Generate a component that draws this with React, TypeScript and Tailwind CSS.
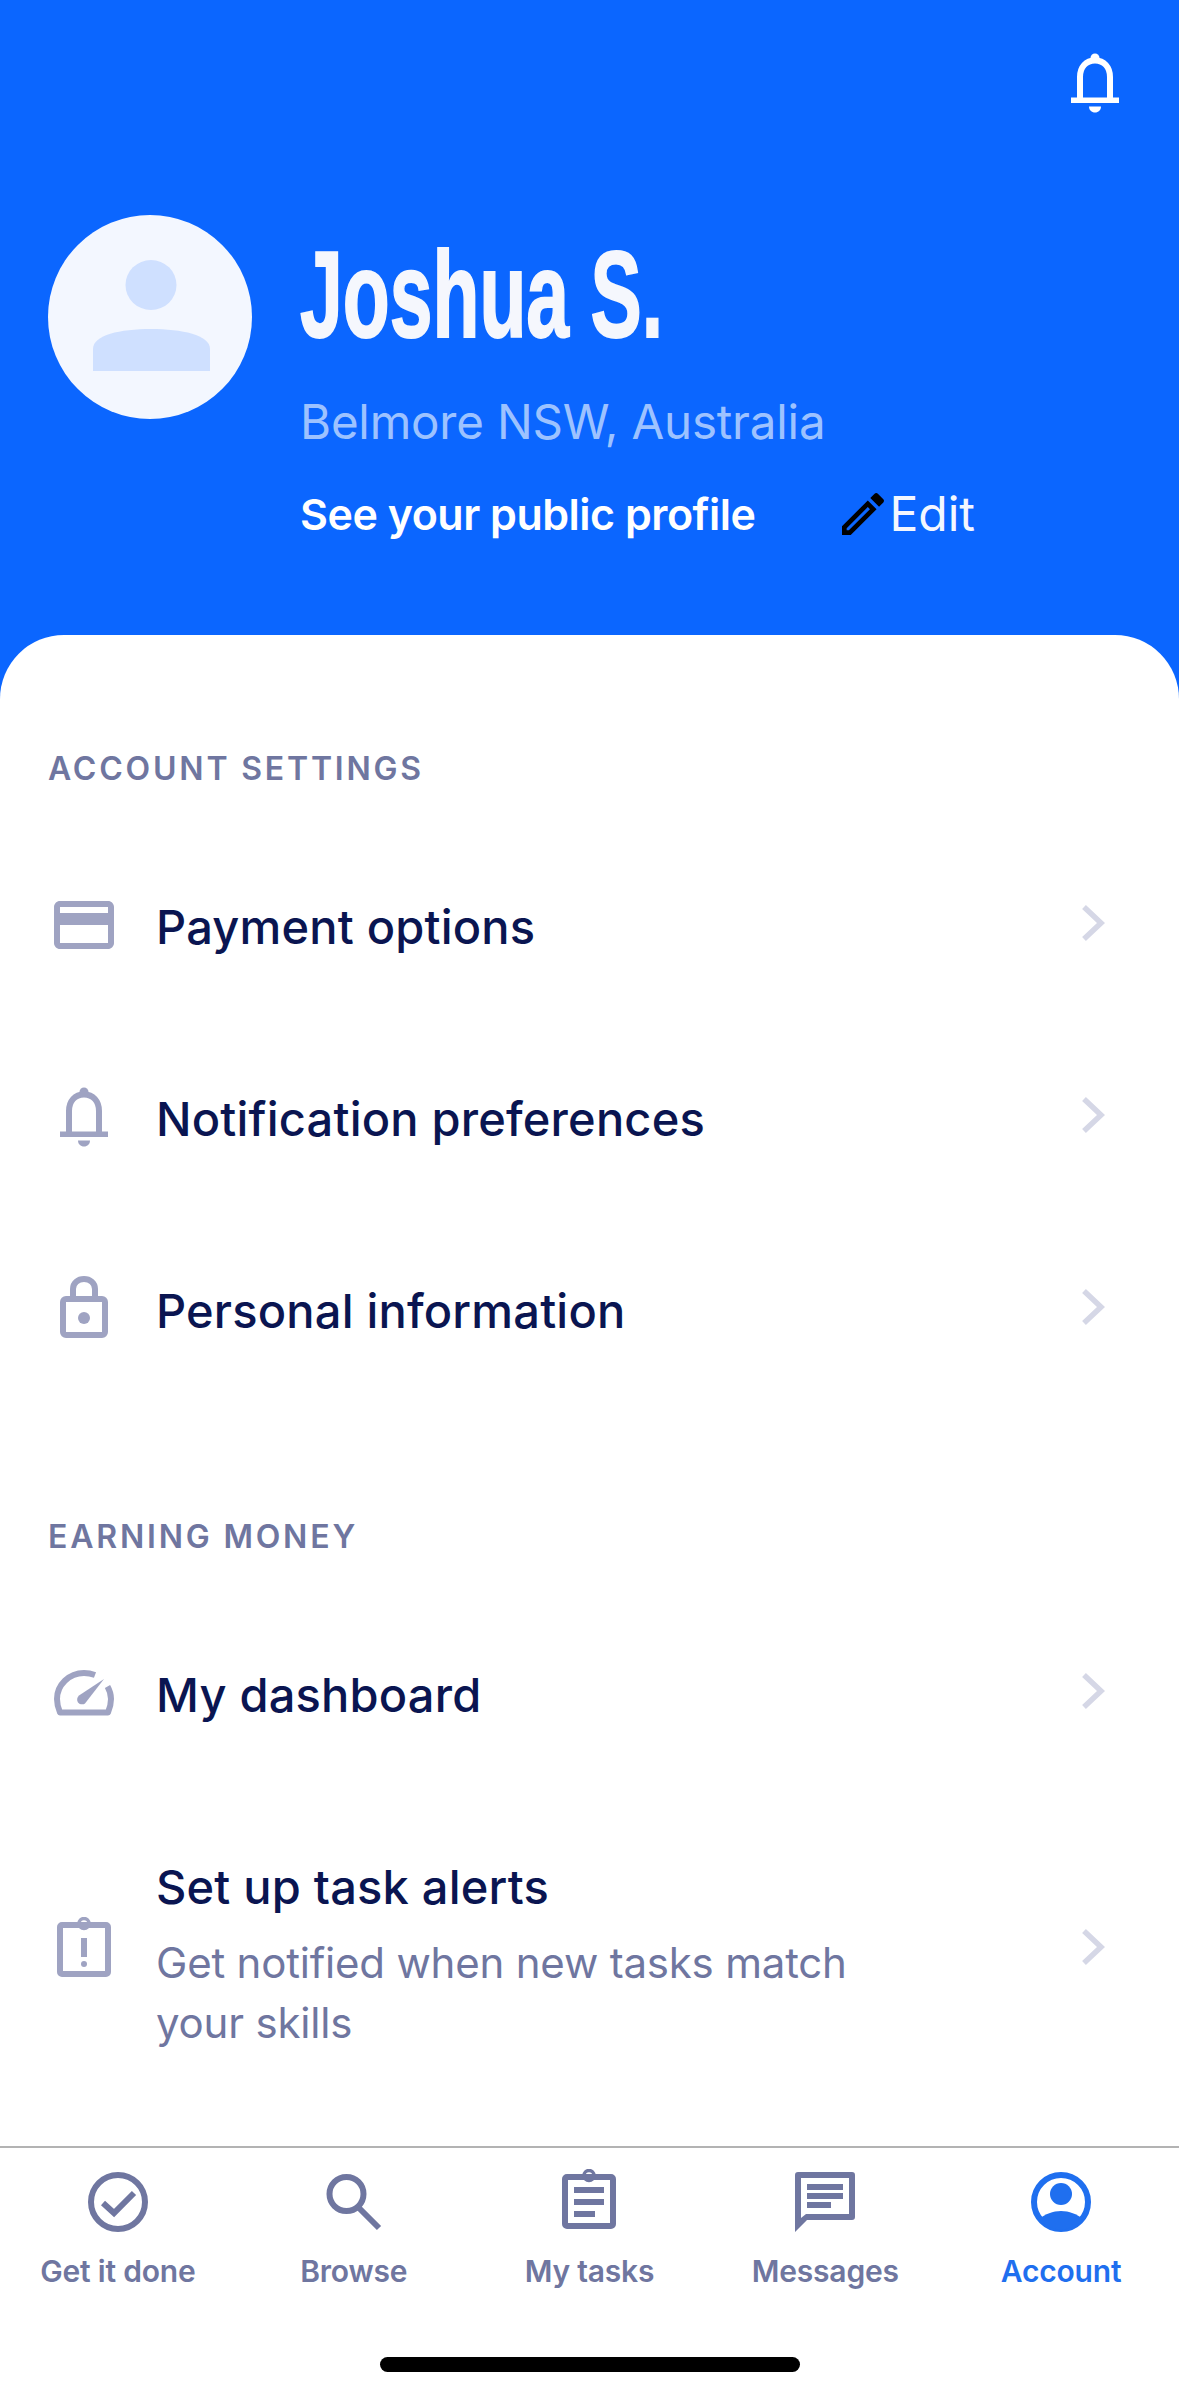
import type { ReactNode } from "react"

const Bell = ({ className }: { className: string }) => (
  <svg viewBox="0 0 48 60" className={className} fill="currentColor">
    <circle cx="24" cy="5" r="4.5" />
    <path d="M9 46V24C9 14 15 7.5 24 7.5S39 14 39 24v22" fill="none" stroke="currentColor" strokeWidth="6" />
    <rect x="0" y="44.5" width="48" height="5.5" />
    <path d="M18 53.5h12c0 3.5-2.5 6-6 6s-6-2.5-6-6z" />
  </svg>
)

const Card = () => (
  <svg viewBox="0 0 24 24" className="w-[72px] h-[72px] text-[#9fa3c2]" fill="currentColor">
    <path d="M20 4H4c-1.11 0-1.99.89-1.99 2L2 18c0 1.11.89 2 2 2h16c1.11 0 2-.89 2-2V6c0-1.11-.89-2-2-2zm0 14H4v-6h16v6zm0-10H4V6h16v2z" />
  </svg>
)

const Lock = () => (
  <svg viewBox="0 0 48 62" className="w-[48px] h-[62px] -mt-[5px] text-[#9fa3c2]" fill="none" stroke="currentColor" strokeWidth="6">
    <rect x="3" y="23" width="42" height="36" rx="3" />
    <path d="M13 23V13C13 7 18 3 24 3s11 4 11 10v10" />
    <circle cx="24" cy="42" r="6" fill="currentColor" stroke="none" />
  </svg>
)

const Gauge = () => (
  <svg viewBox="0 0 60 46" className="w-[60px] h-[46px] text-[#9fa3c2]" fill="none" stroke="currentColor">
    <path d="M41 5C37.500 3.700 34 3 30 3 15 3 3 15 3 29c0 5 1 9 3 13.500h48c2-4.500 3-8.500 3-13.500 0-5-1.500-9-3.500-12.500" strokeWidth="6" strokeLinejoin="round" />
    <path d="M50 9 31 33.500c-2 1.500-5.500 1-7-1s-1-5.500 1-7L50 9z" fill="currentColor" stroke="none" />
  </svg>
)

const Clipboard = ({ className, alert }: { className: string; alert?: boolean }) => (
  <svg viewBox="0 0 54 60" className={className} fill="currentColor">
    <path
      fillRule="evenodd"
      d="M19 5h16a8 8 0 0 1-2 0H49a5 5 0 0 1 5 5v45a5 5 0 0 1-5 5H5a5 5 0 0 1-5-5V10a5 5 0 0 1 5-5h14zM6 11v43h42V11H6z"
    />
    <circle cx="27" cy="6.500" r="5" fill="none" stroke="currentColor" strokeWidth="3.500" />
    {alert ? (
      <>
        <rect x="24" y="21" width="6" height="19" />
        <circle cx="27" cy="47" r="3" />
      </>
    ) : (
      <>
        <rect x="12" y="18" width="30" height="6" />
        <rect x="12" y="30" width="30" height="6" />
        <rect x="12" y="42" width="21" height="6" />
      </>
    )}
  </svg>
)

const Chevron = ({ className }: { className: string }) => (
  <svg viewBox="0 0 24 36" className={`w-[24px] h-[36px] text-[#d5d7e6] shrink-0 ${className}`} fill="none" stroke="currentColor" strokeWidth="5.500">
    <path d="M3 2l17 16L3 34" />
  </svg>
)

const Row = ({ icon, title, sub }: { icon: ReactNode; title: string; sub?: string }) => (
  <div className={`flex items-center pl-12 pr-[74px] ${sub ? "h-[316px]" : "h-[192px]"}`}>
    <div className="w-[72px] flex justify-center shrink-0">{icon}</div>
    <div className={`ml-9 flex-1 ${sub ? "pt-4" : "pt-[3px]"}`}>
      <div className="text-[47px] leading-[60px] text-[#0a1551] font-medium tracking-[0.2px]">{title}</div>
      {sub && <div className="mt-4 w-[720px] text-[42px] leading-[60px] text-[#6f76a0] tracking-[-0.2px]">{sub}</div>}
    </div>
    <Chevron className={sub ? "" : "mb-[4px]"} />
  </div>
)

const Heading = ({ children, className }: { children: string; className: string }) => (
  <div className={`pl-12 h-10 text-[32px] leading-10 font-semibold tracking-[2.8px] text-[#6f76a0] ${className}`}>{children}</div>
)

const tabs: { label: string; active?: boolean; icon: ReactNode }[] = [
  {
    label: "Get it done",
    icon: (
      <svg viewBox="0 0 60 60" className="w-[60px] h-[60px]" fill="none" stroke="currentColor" strokeWidth="6">
        <circle cx="30" cy="30" r="27" />
        <path d="M15 31l11 10 20-20" />
      </svg>
    ),
  },
  {
    label: "Browse",
    icon: (
      <svg viewBox="0 0 60 60" className="w-[60px] h-[60px]" fill="none" stroke="currentColor" strokeWidth="6">
        <circle cx="22.500" cy="22" r="17" />
        <path d="M34 35l21 21" />
      </svg>
    ),
  },
  {
    label: "My tasks",
    icon: <Clipboard className="w-[54px] h-[60px] -mt-[3px]" />,
  },
  {
    label: "Messages",
    icon: (
      <svg viewBox="0 0 60 60" className="w-[60px] h-[60px]" fill="currentColor">
        <path
          fillRule="evenodd"
          d="M3 0h54a3 3 0 0 1 3 3v42a3 3 0 0 1-3 3H12L0 60V3a3 3 0 0 1 3-3zm3 6v40l5-4h43V6H6z"
        />
        <rect x="12" y="12" width="36" height="6" />
        <rect x="12" y="21" width="36" height="6" />
        <rect x="12" y="30" width="24" height="6" />
      </svg>
    ),
  },
  {
    label: "Account",
    active: true,
    icon: (
      <svg viewBox="0 0 60 60" className="w-[60px] h-[60px]" fill="currentColor">
        <circle cx="30" cy="30" r="27" fill="none" stroke="currentColor" strokeWidth="6" />
        <circle cx="30" cy="22" r="11" />
        <path d="M8 47c6-5 14-8 22-8s16 3 22 8a28 28 0 0 1-44 0z" />
      </svg>
    ),
  },
]

export default function App() {
  return (
    <div className="w-[1179px] h-[2396px] bg-[#0b66ff] flex flex-col overflow-hidden font-['Inter',sans-serif]">
      <header className="h-[635px] shrink-0 px-12 pt-[53px]">
        <div className="flex justify-end pr-[12px]">
          <Bell className="w-12 h-[60px] text-white" />
        </div>
        <div className="flex gap-12 mt-[102px]">
          <div className="w-[204px] h-[204px] rounded-full bg-[#f3f7ff] shrink-0">
            <svg viewBox="0 0 204 204" className="w-full h-full">
              <ellipse cx="103" cy="70" rx="25.500" ry="25" fill="#cfe0ff" />
              <path d="M45 156v-22c0-14 27-20 58-20s59 6 59 20v22H45z" fill="#cfe0ff" />
            </svg>
          </div>
          <div className="flex-1 min-w-0">
            <div className="h-[128px] mt-[16px] text-[122px] leading-[128px] font-bold text-[#f5f7fd] font-['Liberation_Sans',sans-serif] origin-left scale-x-[0.63] whitespace-nowrap [-webkit-text-stroke:2px_#f5f7fd]">
              Joshua S.
            </div>
            <div className="mt-[33px] text-[47.500px] leading-[60px] text-[#9dc2ff] tracking-[-0.2px]">Belmore NSW, Australia</div>
            <div className="mt-[32px] flex items-center h-[60px]">
              <span className="text-[43px] leading-[60px] font-semibold text-white tracking-[-0.5px]">See your public profile</span>
              <svg viewBox="0 0 24 24" className="w-14 h-14 ml-[79px] text-black" fill="currentColor">
                <path d="M3 17.250V21h3.750L17.810 9.940l-3.750-3.750L3 17.250zM5.920 19H5v-.92l9.060-9.060.92.92L5.920 19zM20.710 5.630l-2.340-2.340c-.39-.39-1.020-.39-1.410 0l-1.830 1.830 3.750 3.750 1.830-1.830c.39-.39.39-1.020 0-1.410z" />
              </svg>
              <span className="-ml-[1px] text-[48px] leading-[60px] text-[#f3f7ff]">Edit</span>
            </div>
          </div>
        </div>
      </header>

      <main className="flex-1 bg-white rounded-t-[64px] flex flex-col">
        <Heading className="mt-[114px] mb-10">ACCOUNT SETTINGS</Heading>
        <Row icon={<Card />} title="Payment options" />
        <Row icon={<Bell className="w-12 h-[60px] text-[#9fa3c2]" />} title="Notification preferences" />
        <Row icon={<Lock />} title="Personal information" />
        <Heading className="mt-[112px] mb-10">EARNING MONEY</Heading>
        <Row icon={<Gauge />} title="My dashboard" />
        <Row
          icon={<Clipboard alert className="w-[54px] h-[60px] text-[#9fa3c2]" />}
          title="Set up task alerts"
          sub="Get notified when new tasks match your skills"
        />

        <nav className="mt-auto border-t-2 border-[#b3b3b3] h-[250px] bg-white flex flex-col">
          <div className="flex">
            {tabs.map((t) => (
              <div key={t.label} className={`flex-1 flex flex-col items-center pt-6 ${t.active ? "text-[#1f6fef]" : "text-[#6f76a0]"}`}>
                <div className="h-[60px] flex items-start">{t.icon}</div>
                <span className="mt-[19px] text-[30px] leading-10 font-semibold tracking-[-0.2px]">{t.label}</span>
              </div>
            ))}
          </div>
          <div className="mt-auto mb-[24px] mx-auto w-[420px] h-[15px] rounded-full bg-black" />
        </nav>
      </main>
    </div>
  )
}
